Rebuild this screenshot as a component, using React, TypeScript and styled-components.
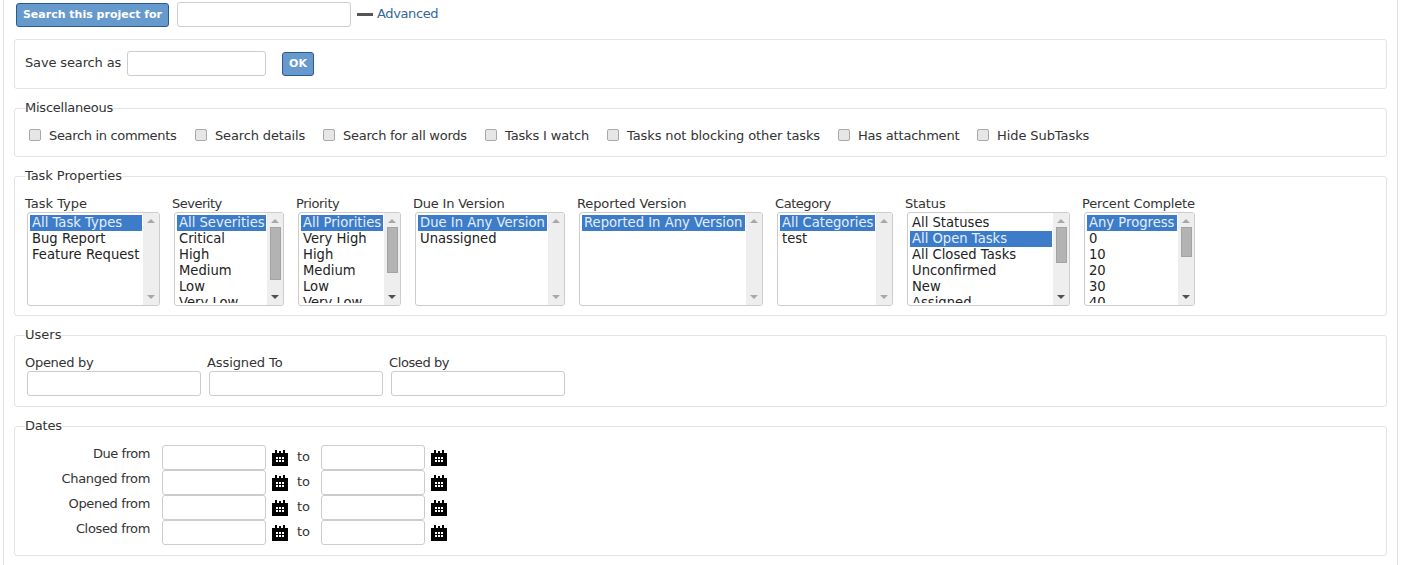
import React from "react";
import styled, { createGlobalStyle } from "styled-components";

const Global = createGlobalStyle`
  html, body { margin: 0; padding: 0; height: 565px; overflow: hidden; background: #fff; }
  body { font-family: "DejaVu Sans", sans-serif; font-size: 13px; color: #333; }
  * { box-sizing: border-box; }
`;

const Page = styled.div`
  margin: 0 6px 0 3px;
  height: 565px;
  border-left: 1px solid #e0e0e0;
  border-right: 1px solid #e0e0e0;
  padding: 2px 10px 0 10px;
`;

const TopBar = styled.form`
  display: flex;
  align-items: center;
  height: 25px;
  margin-bottom: 12px;
  padding-left: 2px;
`;

const Button = styled.button<{ $w: number }>`
  width: ${(p) => p.$w}px;
  height: 24px;
  padding: 0;
  background: #6699cc;
  border: 1px solid #2a5a8f;
  border-radius: 3px;
  color: #fff;
  font: bold 11px "DejaVu Sans", sans-serif;
`;

const TextInput = styled.input<{ $w: number }>`
  width: ${(p) => p.$w}px;
  height: 25px;
  padding: 0 4px;
  background: #fff;
  border: 1px solid #ccc;
  border-radius: 3px;
  flex: none;
  display: block;
`;

const TopInput = styled(TextInput)`
  margin-left: 8px;
`;

const Dash = styled.span`
  width: 16px;
  height: 3px;
  margin: 0 4px 0 6px;
  background: #555;
`;

const Link = styled.a`
  color: #336699;
  font-size: 13px;
  text-decoration: none;
  letter-spacing: -0.37px;
  margin-top: -3px;
`;

const Box = styled.fieldset<{ $h: number }>`
  margin: 0;
  padding: 0 10px;
  min-width: 0;
  height: ${(p) => p.$h}px;
  border: 1px solid #e3e3e3;
  border-radius: 3px;
`;

const Legend = styled.legend<{ $ls?: number }>`
  padding: 0 0 2px;
  margin: 0;
  font-size: 13px;
  line-height: 15px;
  color: #333;
  letter-spacing: ${(p) => p.$ls ?? 0}px;
`;

const Section = styled.div`
  margin-top: 11px;
`;

const SaveRow = styled.div`
  display: flex;
  align-items: center;
  height: 47px;
`;

const SaveLabel = styled.label`
  margin: 0 6px 2px 0;
  width: 96px;
  white-space: nowrap;
  letter-spacing: -0.14px;
`;

const OkWrap = styled.div`
  margin-left: 16px;
`;

const CheckRow = styled.div`
  display: flex;
  align-items: center;
  height: 16px;
  margin-top: 10px;
  padding-left: 4px;
`;

const CheckItem = styled.label<{ $w: number; $ls: number }>`
  display: flex;
  align-items: center;
  width: ${(p) => p.$w}px;
  flex: none;
  white-space: nowrap;
  letter-spacing: ${(p) => p.$ls}px;
`;

const CheckBoxMark = styled.span`
  width: 12px;
  height: 12px;
  margin-right: 8px;
  flex: none;
  background: #e6e6e6;
  border: 1px solid #a9a9a9;
  border-radius: 2px;
`;

const ListRow = styled.div`
  display: flex;
  margin-top: 11px;
`;

const Group = styled.div<{ $w: number }>`
  width: ${(p) => p.$w}px;
  flex: none;
`;

const GroupLabel = styled.div<{ $ls?: number }>`
  height: 16px;
  line-height: 15px;
  white-space: nowrap;
  letter-spacing: ${(p) => p.$ls ?? 0}px;
`;

const ListBox = styled.div<{ $w: number }>`
  display: flex;
  width: ${(p) => p.$w}px;
  height: 94px;
  margin-left: 2px;
  background: #fff;
  border: 1px solid #ccc;
  border-radius: 3px;
  overflow: hidden;
`;

const Items = styled.div`
  flex: 1;
  min-width: 0;
  height: 88px;
  margin: 2px 1px 0 2px;
  overflow: hidden;
`;

const Item = styled.div<{ $sel?: boolean }>`
  height: 16px;
  padding-left: 2px;
  line-height: 16px;
  font-size: 13.17px;
  white-space: nowrap;
  color: ${(p) => (p.$sel ? "#e4eefa" : "#222")};
  background: ${(p) => (p.$sel ? "#3d7cc9" : "transparent")};
`;

const Scroll = styled.div`
  position: relative;
  width: 16px;
  flex: none;
  background: #eeeeee;
`;

const Thumb = styled.div<{ $h: number }>`
  position: absolute;
  left: 3px;
  top: 14px;
  width: 11px;
  height: ${(p) => p.$h}px;
  background: #b3b3b3;
  border: 1px solid #a3a3a3;
`;

const Arrow = styled.div<{ $down?: boolean; $on?: boolean }>`
  position: absolute;
  left: 4px;
  ${(p) => (p.$down ? "bottom: 6px;" : "top: 6px;")}
  width: 0;
  height: 0;
  border-left: 4px solid transparent;
  border-right: 4px solid transparent;
  ${(p) =>
    p.$down
      ? `border-top: 4px solid ${p.$on ? "#505050" : "#a8a8a8"};`
      : `border-bottom: 4px solid #a8a8a8;`}
`;

const UserRow = styled.div`
  display: flex;
  margin-top: 11px;
`;

const UserGroup = styled.div`
  width: 182px;
  flex: none;
`;

const UserInput = styled(TextInput)`
  margin-left: 2px;
`;

const DateGrid = styled.div`
  padding-top: 10px;
`;

const DateRow = styled.div`
  display: flex;
  height: 25px;
`;

const DateLabel = styled.label<{ $ls: number }>`
  width: 125px;
  margin-right: 12px;
  text-align: right;
  white-space: nowrap;
  line-height: 17px;
  letter-spacing: ${(p) => p.$ls}px;
`;

const CalWrap = styled.span`
  display: block;
  width: 16px;
  height: 16px;
  margin: 5px 0 0 6px;
  flex: none;
`;

const ToText = styled.span`
  width: 33px;
  padding-left: 9px;
  line-height: 24px;
  flex: none;
`;

const Cal = () => (
  <CalWrap>
    <svg width="16" height="16" viewBox="0 0 16 16" aria-hidden="true">
      <path
        fill="#000"
        fillRule="evenodd"
        d="M0 3h3V0h2v3h2V1h2v2h2V0h2v3h3v13H0zM4 7v2h2V7zm3 0v2h2V7zm3 0v2h2V7zM4 10v2h2v-2zm3 0v2h2v-2zm3 0v2h2v-2z"
      />
    </svg>
  </CalWrap>
);

const checks: [string, number, number][] = [
  ["Search in comments", 166, -0.33],
  ["Search details", 128, -0.14],
  ["Search for all words", 162, -0.25],
  ["Tasks I watch", 122, -0.15],
  ["Tasks not blocking other tasks", 231, -0.1],
  ["Has attachment", 139, -0.2],
  ["Hide SubTasks", 130, -0.08],
];

type L = { label: string; w: number; ls: number; items: string[]; sel: number; thumb?: number };
const lists: L[] = [
  { label: "Task Type", w: 133, ls: 0, items: ["All Task Types", "Bug Report", "Feature Request"], sel: 0 },
  { label: "Severity", w: 110, ls: -0.5, items: ["All Severities", "Critical", "High", "Medium", "Low", "Very Low"], sel: 0, thumb: 53 },
  { label: "Priority", w: 103, ls: -0.35, items: ["All Priorities", "Very High", "High", "Medium", "Low", "Very Low"], sel: 0, thumb: 46 },
  { label: "Due In Version", w: 150, ls: -0.2, items: ["Due In Any Version", "Unassigned"], sel: 0 },
  { label: "Reported Version", w: 184, ls: -0.12, items: ["Reported In Any Version"], sel: 0 },
  { label: "Category", w: 116, ls: -0.45, items: ["All Categories", "test"], sel: 0 },
  { label: "Status", w: 163, ls: -0.15, items: ["All Statuses", "All Open Tasks", "All Closed Tasks", "Unconfirmed", "New", "Assigned"], sel: 1, thumb: 36 },
  { label: "Percent Complete", w: 111, ls: -0.18, items: ["Any Progress", "0", "10", "20", "30", "40"], sel: 0, thumb: 30 },
];

const users: [string, number][] = [
  ["Opened by", -0.3],
  ["Assigned To", -0.1],
  ["Closed by", -0.4],
];

const dates: [string, number][] = [
  ["Due from", -0.45],
  ["Changed from", -0.33],
  ["Opened from", -0.36],
  ["Closed from", -0.36],
];

export default function App() {
  return (
    <Page>
      <Global />
      <TopBar>
        <Button type="button" $w={153}>Search this project for</Button>
        <TopInput $w={174} />
        <Dash />
        <Link href="#">Advanced</Link>
      </TopBar>

      <Box $h={50}>
        <SaveRow>
          <SaveLabel>Save search as</SaveLabel>
          <TextInput $w={139} />
          <OkWrap>
            <Button type="button" $w={32}>OK</Button>
          </OkWrap>
        </SaveRow>
      </Box>

      <Section>
        <Box $h={57}>
          <Legend $ls={-0.23}>Miscellaneous</Legend>
          <CheckRow>
            {checks.map(([t, w, ls]) => (
              <CheckItem key={t} $w={w} $ls={ls}>
                <CheckBoxMark />
                {t}
              </CheckItem>
            ))}
          </CheckRow>
        </Box>
      </Section>

      <Section>
        <Box $h={148}>
          <Legend $ls={-0.07}>Task Properties</Legend>
          <ListRow>
            {lists.map((l) => (
              <Group key={l.label} $w={l.w + 14}>
                <GroupLabel $ls={l.ls}>{l.label}</GroupLabel>
                <ListBox $w={l.w}>
                  <Items>
                    {l.items.map((it, i) => (
                      <Item key={it} $sel={i === l.sel}>{it}</Item>
                    ))}
                  </Items>
                  <Scroll>
                    <Arrow />
                    {l.thumb ? <Thumb $h={l.thumb} /> : null}
                    <Arrow $down $on={!!l.thumb} />
                  </Scroll>
                </ListBox>
              </Group>
            ))}
          </ListRow>
        </Box>
      </Section>

      <Section>
        <Box $h={80}>
          <Legend>Users</Legend>
          <UserRow>
            {users.map(([t, ls]) => (
              <UserGroup key={t}>
                <GroupLabel $ls={ls}>{t}</GroupLabel>
                <UserInput $w={174} />
              </UserGroup>
            ))}
          </UserRow>
        </Box>
      </Section>

      <Section>
        <Box $h={138}>
          <Legend $ls={-0.2}>Dates</Legend>
          <DateGrid>
            {dates.map(([t, ls]) => (
              <DateRow key={t}>
                <DateLabel $ls={ls}>{t}</DateLabel>
                <TextInput $w={104} />
                <Cal />
                <ToText>to</ToText>
                <TextInput $w={104} />
                <Cal />
              </DateRow>
            ))}
          </DateGrid>
        </Box>
      </Section>
    </Page>
  );
}
